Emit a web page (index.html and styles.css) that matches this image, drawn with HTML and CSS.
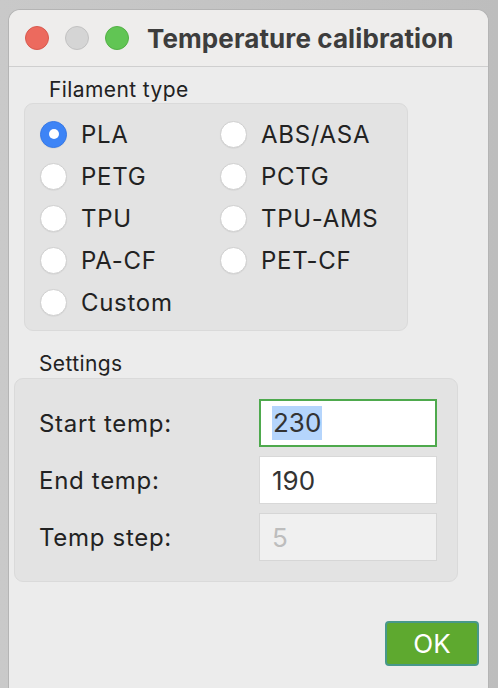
FILE: index.html
```html
<!DOCTYPE html>
<html lang="en">
<head>
  <meta charset="UTF-8">
  <meta name="viewport" content="width=device-width, initial-scale=1.0">
  <title>Temperature calibration</title>
  <link rel="stylesheet" href="styles.css">
</head>
<body>
  <div class="window">
    <div class="titlebar">
      <span class="light red"></span>
      <span class="light gray"></span>
      <span class="light green"></span>
      <h1>Temperature calibration</h1>
    </div>

    <div class="content">
      <div class="group-label first">Filament type</div>
      <div class="group filaments">
        <label class="opt"><span class="radio checked"></span>PLA</label>
        <label class="opt"><span class="radio"></span>ABS/ASA</label>
        <label class="opt"><span class="radio"></span>PETG</label>
        <label class="opt"><span class="radio"></span>PCTG</label>
        <label class="opt"><span class="radio"></span>TPU</label>
        <label class="opt"><span class="radio"></span>TPU-AMS</label>
        <label class="opt"><span class="radio"></span>PA-CF</label>
        <label class="opt"><span class="radio"></span>PET-CF</label>
        <label class="opt"><span class="radio"></span>Custom</label>
      </div>

      <div class="group-label second">Settings</div>
      <div class="group settings">
        <div class="row">
          <span class="field-label">Start temp:</span>
          <div class="field focused"><span class="sel">230</span></div>
        </div>
        <div class="row">
          <span class="field-label">End temp:</span>
          <div class="field">190</div>
        </div>
        <div class="row">
          <span class="field-label">Temp step:</span>
          <div class="field disabled">5</div>
        </div>
      </div>

      <div class="actions">
        <button type="button" class="ok">OK</button>
      </div>
    </div>
  </div>
</body>
</html>
```

FILE: styles.css
```css
body { margin: 0; height: 688px; overflow: hidden; background: linear-gradient(to right, #c9c9c9, #bdbdbd); font-family: Inter, "Open Sans", sans-serif; color: #222; }

.window { margin: 9px 0 0 8px; width: 481px; height: 700px; background: #ececec; border: 1px solid #b4b4b4; border-bottom: none; border-radius: 12px 12px 0 0; box-sizing: border-box; }

.titlebar { height: 57px; display: flex; align-items: center; padding-left: 16px; background: #eeedec; border-bottom: 1px solid #cfcfcf; border-radius: 12px 12px 0 0; box-sizing: border-box; }
.light { width: 24px; height: 24px; border-radius: 50%; margin-right: 16px; box-sizing: border-box; }
.light.red { background: #ec6a5e; border: 1px solid #d8594e; }
.light.gray { background: #d5d5d5; border: 1px solid #c2c2c2; }
.light.green { background: #61c554; border: 1px solid #52b045; }
.titlebar h1 { margin: 0 0 0 2px; font-size: 26px; font-weight: 700; color: #3d3d3d; letter-spacing: 0.1px; }

.content { padding: 0; }

.group-label { font-size: 21px; color: #222; line-height: 24px; letter-spacing: 0.4px; }
.group-label.first { padding: 11px 0 1px 40px; }
.group-label.second { padding: 21px 0 2px 30px; }

.group { background: #e3e3e3; border: 1px solid #dadada; border-radius: 9px; box-sizing: border-box; }

.filaments { margin-left: 15px; width: 384px; height: 228px; padding: 16px 0 0 15px; display: grid; grid-template-columns: 180px 180px; grid-auto-rows: 42px; }
.opt { display: flex; align-items: center; height: 28px; font-size: 24px; letter-spacing: 0.7px; color: #222; }
.radio { width: 27px; height: 27px; border-radius: 50%; background: #fff; border: 1px solid #d0d0d0; box-sizing: border-box; margin-right: 14px; box-shadow: 0 0.5px 1px rgba(0,0,0,0.08); display: flex; align-items: center; justify-content: center; }
.radio.checked { background: #3d84f6; border-color: #3779e6; }
.radio.checked::after { content: ""; width: 10px; height: 10px; border-radius: 50%; background: #fff; }

.settings { margin-left: 5px; width: 444px; height: 204px; padding: 20px 0 0 24px; display: flex; flex-direction: column; gap: 9px; }
.row { display: flex; align-items: center; height: 48px; }
.field-label { width: 220px; font-size: 24px; letter-spacing: 0.7px; color: #222; }
.field { width: 178px; height: 48px; box-sizing: border-box; background: #fff; border: 1px solid #d8d8d8; display: flex; align-items: center; padding-left: 12px; font-size: 26px; color: #333; }
.field.focused { border: 2px solid #4ea94d; padding-left: 11px; }
.field .sel { background: #b5d5fc; padding: 0 1px; line-height: 34px; }
.field.disabled { background: #f0f0f0; border-color: #d6d6d6; color: #bdbdbd; }

.actions { display: flex; justify-content: flex-end; padding: 39px 9px 0 0; }
.ok { width: 94px; height: 45px; background: #5ea92f; color: #fff; border: 2px solid #48988a; border-radius: 4px; font-family: Inter, "Open Sans", sans-serif; font-size: 26px; padding: 0; }
```
